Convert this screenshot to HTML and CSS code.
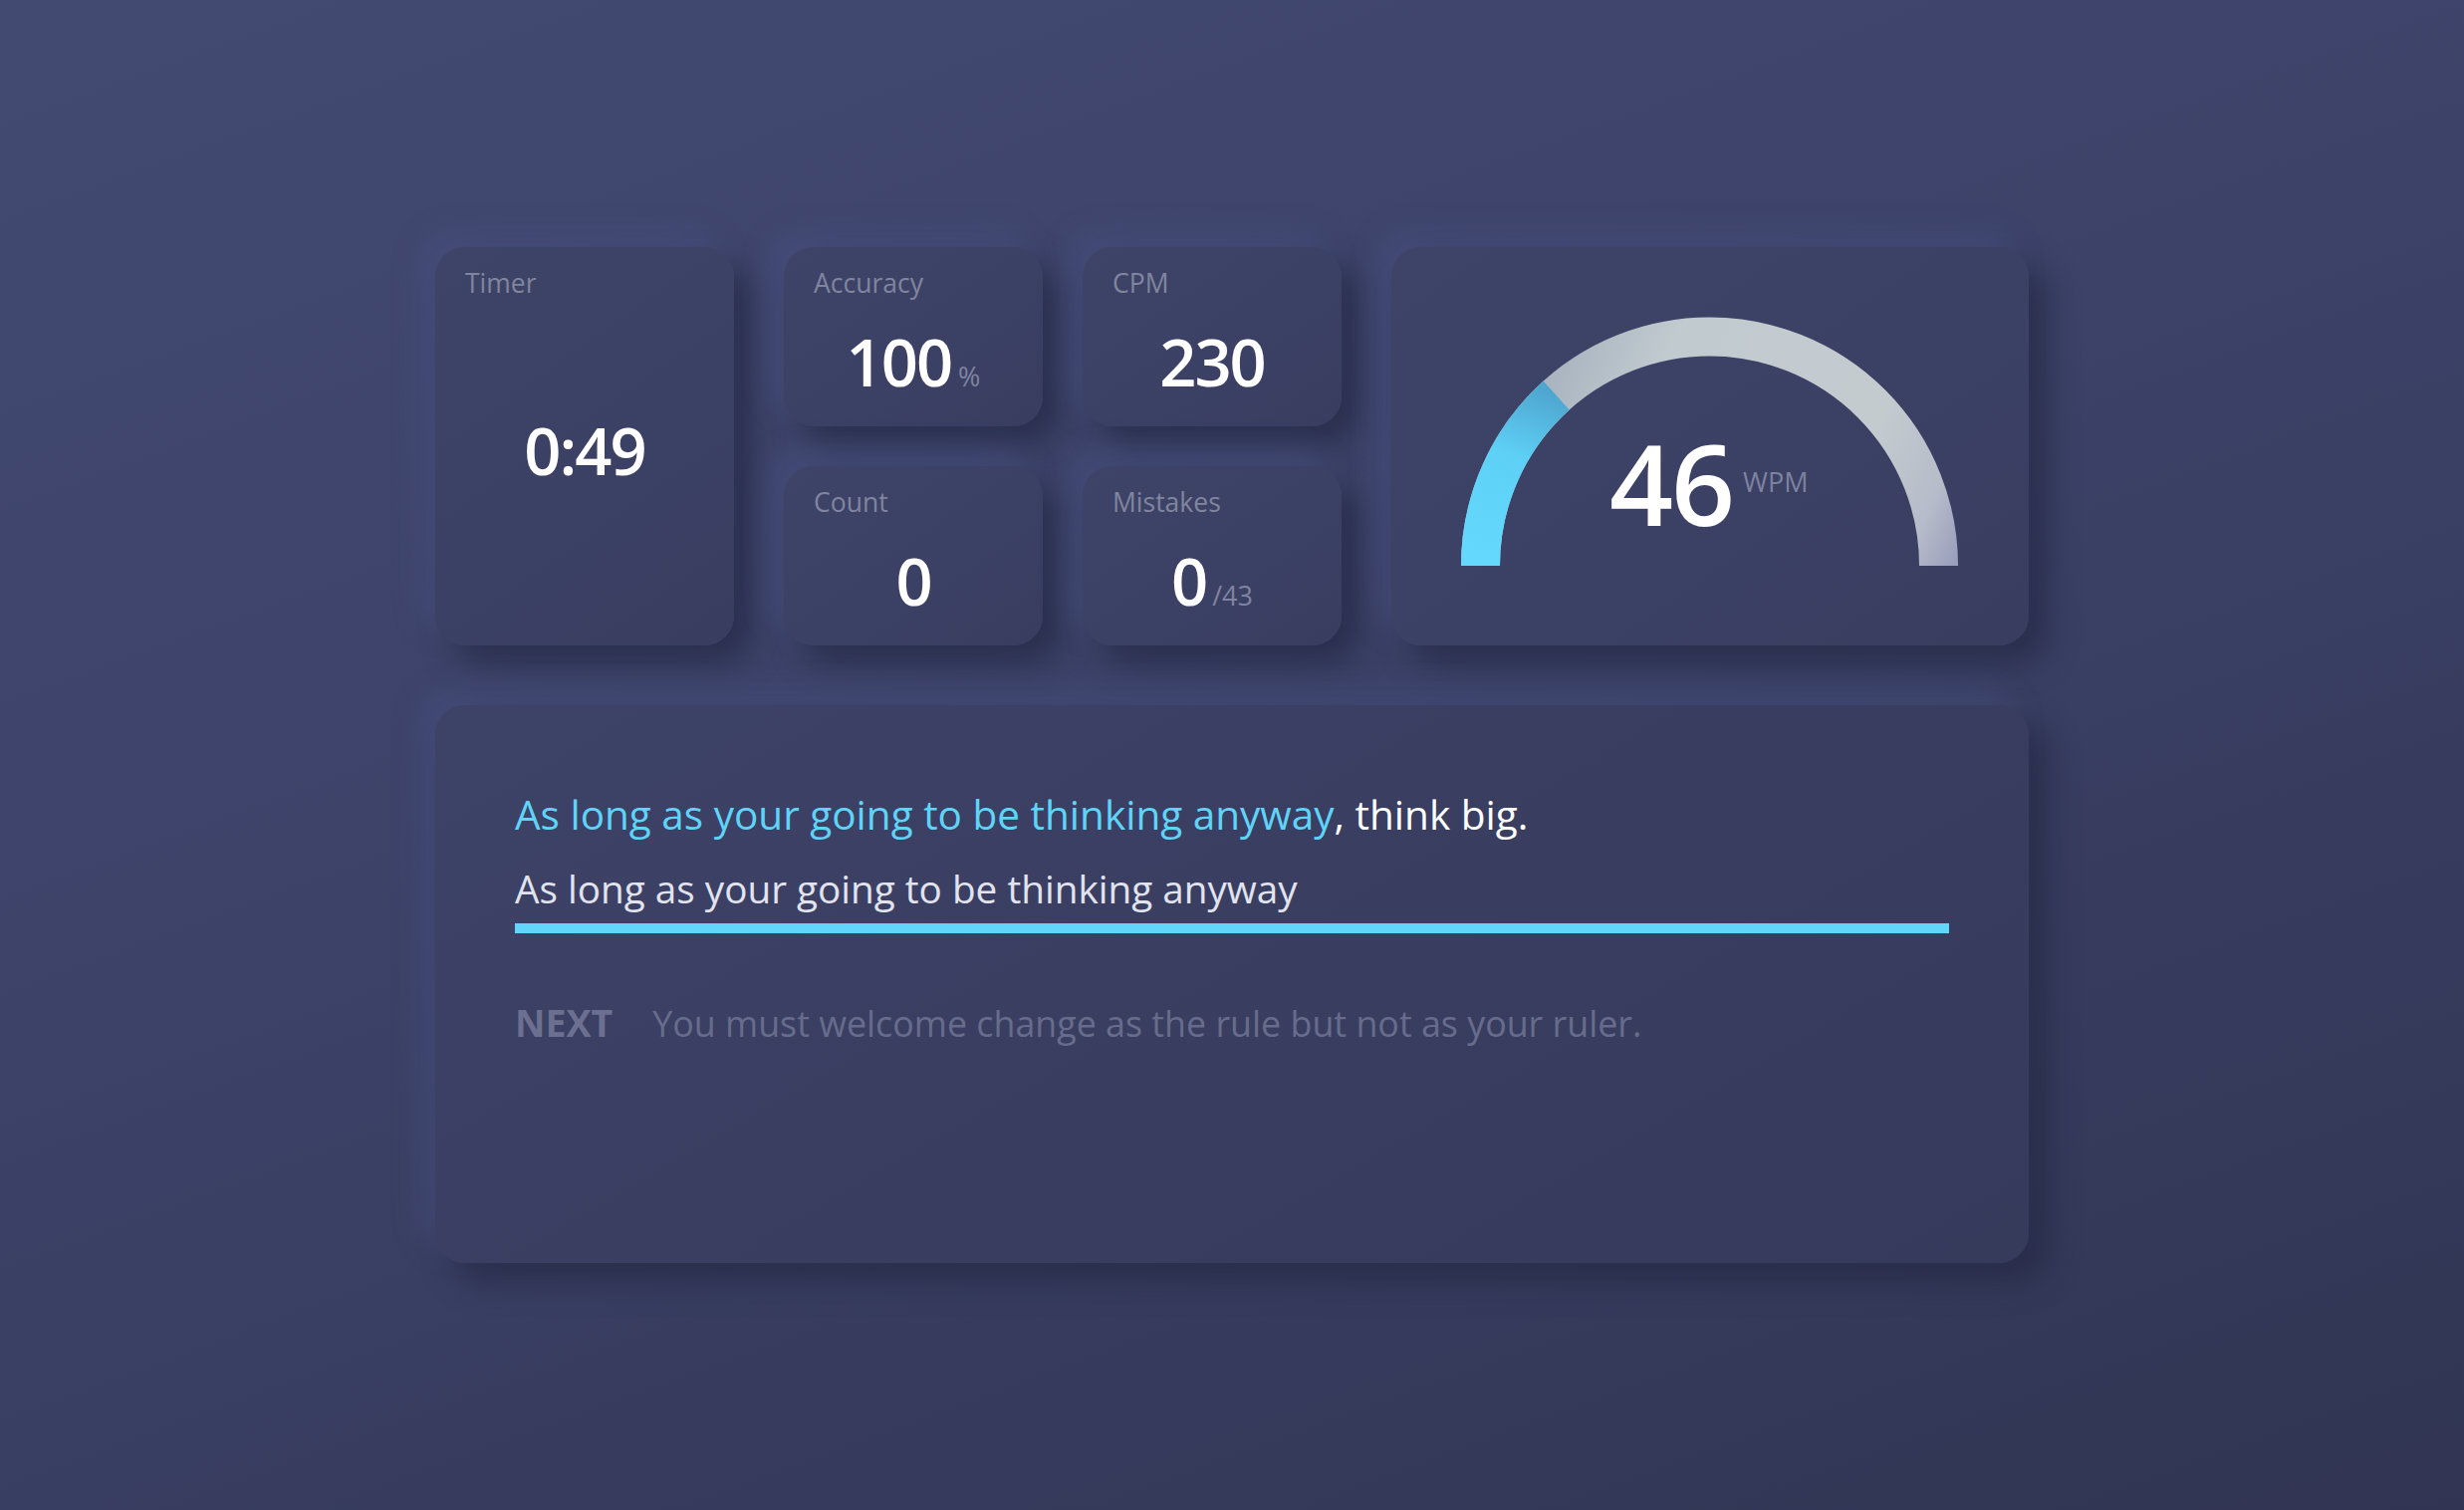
FILE: index.html
```html
<!DOCTYPE html>
<html lang="en">
<head>
<meta charset="utf-8">
<title>Typing Speed Test</title>
<link rel="stylesheet" href="styles.css">
</head>
<body>
<main class="board">
  <section class="stats">
    <div class="card timer">
      <div class="label">Timer</div>
      <div class="timer-body"><span class="value">0:49</span></div>
    </div>
    <div class="mini-grid">
      <div class="card mini">
        <div class="label">Accuracy</div>
        <div class="value">100<span class="unit pct">%</span></div>
      </div>
      <div class="card mini">
        <div class="label">CPM</div>
        <div class="value">230</div>
      </div>
      <div class="card mini">
        <div class="label">Count</div>
        <div class="value">0</div>
      </div>
      <div class="card mini">
        <div class="label">Mistakes</div>
        <div class="value">0<span class="unit">/43</span></div>
      </div>
    </div>
    <div class="card gauge">
      <svg class="gauge-svg" width="640" height="400" viewBox="0 0 640 400">
        <defs>
          <linearGradient id="grayG" gradientUnits="userSpaceOnUse" x1="150" y1="150" x2="560" y2="330">
            <stop offset="0" stop-color="#a9b4c0"/>
            <stop offset="0.22" stop-color="#c1cacf"/>
            <stop offset="0.72" stop-color="#c3cbcf"/>
            <stop offset="0.9" stop-color="#b6bcc9"/>
            <stop offset="1" stop-color="#9a9fbc"/>
          </linearGradient>
          <linearGradient id="blueG" gradientUnits="userSpaceOnUse" x1="100" y1="320" x2="170" y2="150">
            <stop offset="0" stop-color="#64d9fd"/>
            <stop offset="0.6" stop-color="#5ed0f6"/>
            <stop offset="1" stop-color="#4ea6cf"/>
          </linearGradient>
        </defs>
        <path d="M 89.5 320 A 230 230 0 0 1 549.5 320" fill="none" stroke="url(#grayG)" stroke-width="39"/>
        <path d="M 89.5 320 A 230 230 0 0 1 165.6 149.1" fill="none" stroke="url(#blueG)" stroke-width="39"/>
        <text class="wpm-num" x="219" y="280">46</text>
        <text class="wpm-unit" x="353" y="246">WPM</text>
      </svg>
    </div>
  </section>
  <section class="card typing">
    <p class="quote"><span class="done">As long as your going to be thinking anyway</span>, think big.</p>
    <div class="input">As long as your going to be thinking anyway</div>
    <p class="next"><strong class="next-label">NEXT</strong><span class="next-text">You must welcome change as the rule but not as your ruler.</span></p>
  </section>
</main>
</body>
</html>
```

FILE: styles.css
```css
* {
  box-sizing: border-box;
}

html, body {
  margin: 0;
  padding: 0;
}

body {
  min-height: 100vh;
  display: flex;
  align-items: center;
  justify-content: center;
  background: linear-gradient(160deg, #434a72 0%, #3c4268 45%, #313553 100%);
  font-family: "Open Sans", "Noto Sans", sans-serif;
  color: #ffffff;
}

.board {
  width: 1600px;
  display: flex;
  flex-direction: column;
  gap: 60px;
}

.stats {
  display: flex;
  gap: 50px;
  height: 400px;
}

.card {
  border-radius: 30px;
  background: linear-gradient(145deg, #3e4468 0%, #393e61 100%);
  box-shadow: 18px 18px 30px rgba(38, 41, 70, 0.75), -14px -14px 28px rgba(76, 86, 135, 0.45);
}

.label {
  font-size: 26.5px;
  line-height: 30px;
  padding-top: 1px;
  color: #80859f;
}

.value {
  font-size: 65px;
  line-height: 66px;
  font-weight: 600;
  letter-spacing: -2px;
  color: #ffffff;
}

.unit {
  font-size: 27px;
  font-weight: 400;
  letter-spacing: 0;
  color: #7f84a2;
  margin-left: 6px;
}

.unit.pct {
  margin-left: 7px;
}

.timer {
  width: 300px;
  height: 400px;
  padding: 20px 30px 43px;
  display: flex;
  flex-direction: column;
}

.timer-body {
  flex: 1;
  display: flex;
  align-items: center;
  justify-content: center;
}

.mini-grid {
  display: grid;
  grid-template-columns: 260px 260px;
  grid-template-rows: 180px 180px;
  gap: 40px;
}

.mini {
  padding: 20px 30px;
}

.mini .value {
  margin-top: 31px;
  text-align: center;
}

.gauge {
  width: 640px;
  height: 400px;
  overflow: hidden;
}

.gauge-svg {
  display: block;
}

.wpm-num {
  font-family: "Open Sans", "Noto Sans", sans-serif;
  font-size: 112px;
  font-weight: 600;
  letter-spacing: -2px;
  fill: #ffffff;
}

.wpm-unit {
  font-family: "Open Sans", "Noto Sans", sans-serif;
  font-size: 27px;
  fill: #7d82a0;
}

.typing {
  height: 560px;
  padding: 80px 80px;
  background: linear-gradient(150deg, #3d4267 0%, #363a5b 100%);
}

.quote {
  margin: 0;
  font-size: 40.5px;
  line-height: 1.5;
  color: #ffffff;
}

.done {
  color: #5fd4f9;
}

.input {
  margin-top: 14px;
  font-size: 38.7px;
  line-height: 1.5;
  color: #e1e4ee;
  padding-bottom: 6px;
  border-bottom: 10px solid #62d6fa;
}

.next {
  margin: 62px 0 0;
  font-size: 35.8px;
  line-height: 1.5;
  display: flex;
  align-items: baseline;
  color: #676c8c;
}

.next-label {
  font-weight: 700;
  font-size: 37.5px;
  color: #6b7090;
  margin-right: 40px;
}
```
